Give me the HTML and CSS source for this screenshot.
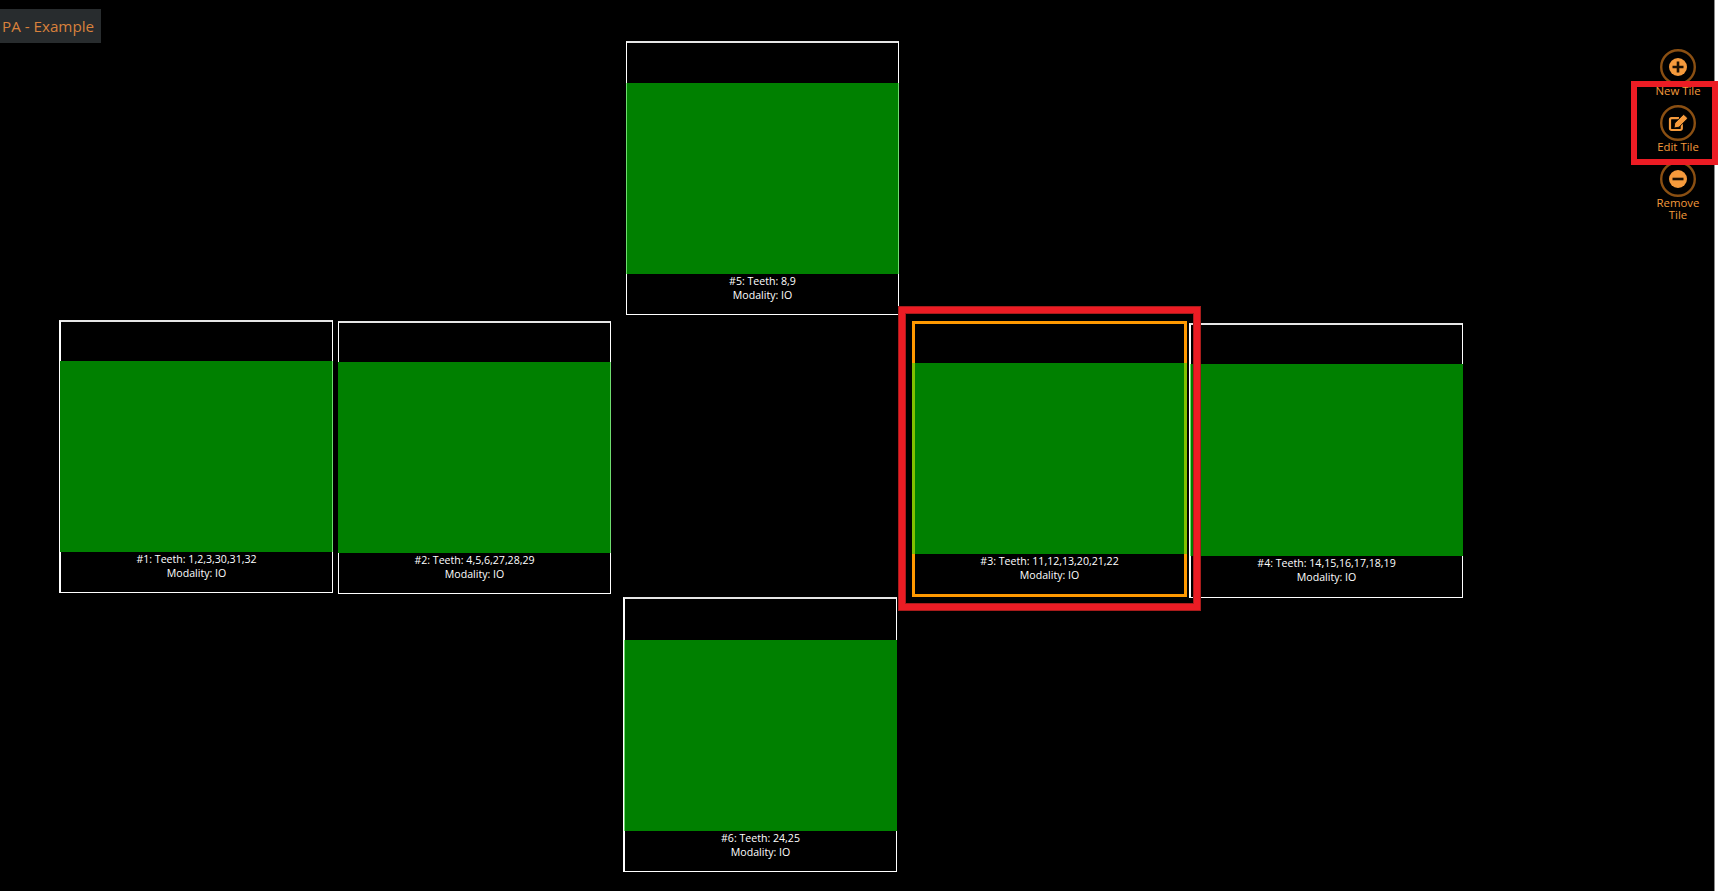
FILE: index.html
```html
<!DOCTYPE html>
<html lang="en">
<head>
    <meta charset="UTF-8">
    <title>PA - Example</title>
    <link rel="stylesheet" href="styles.css">
</head>
<body>
    <div class="app">
        <div class="layout-title">PA - Example</div>

        <div class="tile-canvas">
            <div class="tile tile-1">
                <div class="tile-image"></div>
                <div class="tile-caption">#1: Teeth: 1,2,3,30,31,32<br>Modality: IO</div>
            </div>
            <div class="tile tile-2">
                <div class="tile-image"></div>
                <div class="tile-caption">#2: Teeth: 4,5,6,27,28,29<br>Modality: IO</div>
            </div>
            <div class="tile tile-3 selected">
                <div class="tile-image"></div>
                <div class="tile-caption">#3: Teeth: 11,12,13,20,21,22<br>Modality: IO</div>
            </div>
            <div class="tile tile-4">
                <div class="tile-image"></div>
                <div class="tile-caption">#4: Teeth: 14,15,16,17,18,19<br>Modality: IO</div>
            </div>
            <div class="tile tile-5">
                <div class="tile-image"></div>
                <div class="tile-caption">#5: Teeth: 8,9<br>Modality: IO</div>
            </div>
            <div class="tile tile-6">
                <div class="tile-image"></div>
                <div class="tile-caption">#6: Teeth: 24,25<br>Modality: IO</div>
            </div>
        </div>

        <div class="toolbar">
            <button class="tool-btn">
                <svg class="tool-icon" viewBox="0 0 36 36">
                    <circle class="ring" cx="18" cy="18" r="16.8"/>
                    <circle class="disc" cx="18" cy="18" r="9"/>
                    <path class="cut" d="M18 12.5v11M12.5 18h11"/>
                </svg>
                <span class="tool-label">New Tile</span>
            </button>
            <button class="tool-btn">
                <svg class="tool-icon" viewBox="0 0 36 36">
                    <circle class="ring" cx="18" cy="18" r="16.8"/>
                    <path class="outline" d="M19 13.2h-7.5a1.5 1.5 0 0 0-1.5 1.5v8.8a1.5 1.5 0 0 0 1.5 1.5h8.8a1.5 1.5 0 0 0 1.5-1.5v-5"/>
                    <path class="disc pencil" d="M14 23l.8-5 8-8a1.2 1.2 0 0 1 1.7 0l2.5 2.5a1.2 1.2 0 0 1 0 1.7l-8 8z"/>
                </svg>
                <span class="tool-label">Edit Tile</span>
            </button>
            <button class="tool-btn">
                <svg class="tool-icon" viewBox="0 0 36 36">
                    <circle class="ring" cx="18" cy="18" r="16.8"/>
                    <circle class="disc" cx="18" cy="18" r="9"/>
                    <path class="cut" d="M12.5 18h11"/>
                </svg>
                <span class="tool-label">Remove Tile</span>
            </button>
        </div>
    </div>

    <div class="callout callout-tile"></div>
    <div class="callout callout-edit"></div>
</body>
</html>
```

FILE: styles.css
```css
* {
    margin: 0;
    padding: 0;
    box-sizing: border-box;
}

body {
    position: relative;
    height: 891px;
    overflow: hidden;
    background: #fff;
    font-family: "Open Sans", "Liberation Sans", sans-serif;
}

.app {
    position: relative;
    display: flex;
    justify-content: space-between;
    align-items: flex-start;
    width: 1715px;
    height: 891px;
    background: #000;
    border-right: 1px solid #8a8a8a;
}

.layout-title {
    margin-top: 9px;
    height: 34px;
    width: 101px;
    padding-left: 2px;
    background: #282c2e;
    color: #d9813c;
    font-size: 15.2px;
    line-height: 35px;
    white-space: nowrap;
}

.tile-canvas {
    position: absolute;
    inset: 0;
}

.tile {
    position: absolute;
    display: flex;
    flex-direction: column;
    width: 273px;
    height: 274px;
    padding-top: 40px;
    border: 1px solid #fff;
    border-top: 2px solid #e6e6e6;
    color: #fff;
}

.tile-image {
    flex: none;
    height: 191px;
    margin: 0 -1px;
    background: #008000;
    border-left: 1px solid #6fdc6f;
    border-right: 1px solid #6fdc6f;
}

.tile-caption {
    padding-top: 1px;
    text-align: center;
    font-size: 10.6px;
    line-height: 13.5px;
}

.tile-1 { left: 59px; top: 320px; width: 274px; height: 273px; border-left-width: 2px; padding-top: 39px; }
.tile-2 { left: 338px; top: 321px; height: 273px; padding-top: 39px; }
.tile-3 { left: 912px; top: 321px; }
.tile-4 { left: 1189px; top: 323px; width: 274px; height: 275px; padding-top: 39px; border-left-width: 2px; }
.tile-5 { left: 626px; top: 41px; }
.tile-6 { left: 623px; top: 597px; width: 274px; height: 275px; padding-top: 41px; border-left-width: 2px; }

.tile-1 .tile-image,
.tile-2 .tile-image {
    border-left-color: #008000;
}

.tile-4 .tile-image,
.tile-6 .tile-image {
    border-right-color: #008000;
}

.tile-4 .tile-image {
    height: 192px;
}

.tile.selected {
    width: 275px;
    height: 276px;
    padding-top: 39px;
    border: 3px solid #ff9900;
}

.selected .tile-image {
    margin: 0 -3px;
    border-left: 3px solid #80c000;
    border-right: 3px solid #80c000;
}

.toolbar {
    position: relative;
    display: flex;
    flex-direction: column;
    width: 60px;
    margin-right: 6px;
    padding-top: 49px;
}

.tool-btn {
    display: flex;
    flex-direction: column;
    align-items: center;
    height: 56px;
    background: none;
    border: none;
    color: #f39a3c;
    font-family: inherit;
}

.tool-icon {
    flex: none;
    width: 36px;
    height: 36px;
}

.ring {
    fill: none;
    stroke: #8a4f12;
    stroke-width: 2.4;
}

.disc {
    fill: #f59a3c;
}

.pencil {
    stroke: #000;
    stroke-width: 0.9;
}

.cut {
    fill: none;
    stroke: #1a0f02;
    stroke-width: 2.6;
}

.outline {
    fill: none;
    stroke: #f59a3c;
    stroke-width: 2.2;
}

.tool-label {
    font-size: 11.4px;
    line-height: 11.5px;
    text-align: center;
}

/* red annotation boxes drawn over the screenshot */
.callout {
    position: absolute;
    border: 6px solid #ec1c24;
    box-shadow: 0 0 0 1px #a81c1c, inset 0 0 0 1px #a81c1c;
}

.callout-tile {
    left: 899px;
    top: 307px;
    width: 301px;
    height: 303px;
}

.callout-edit {
    left: 1631px;
    top: 81px;
    width: 87px;
    height: 84px;
    box-shadow: none;
}
```
